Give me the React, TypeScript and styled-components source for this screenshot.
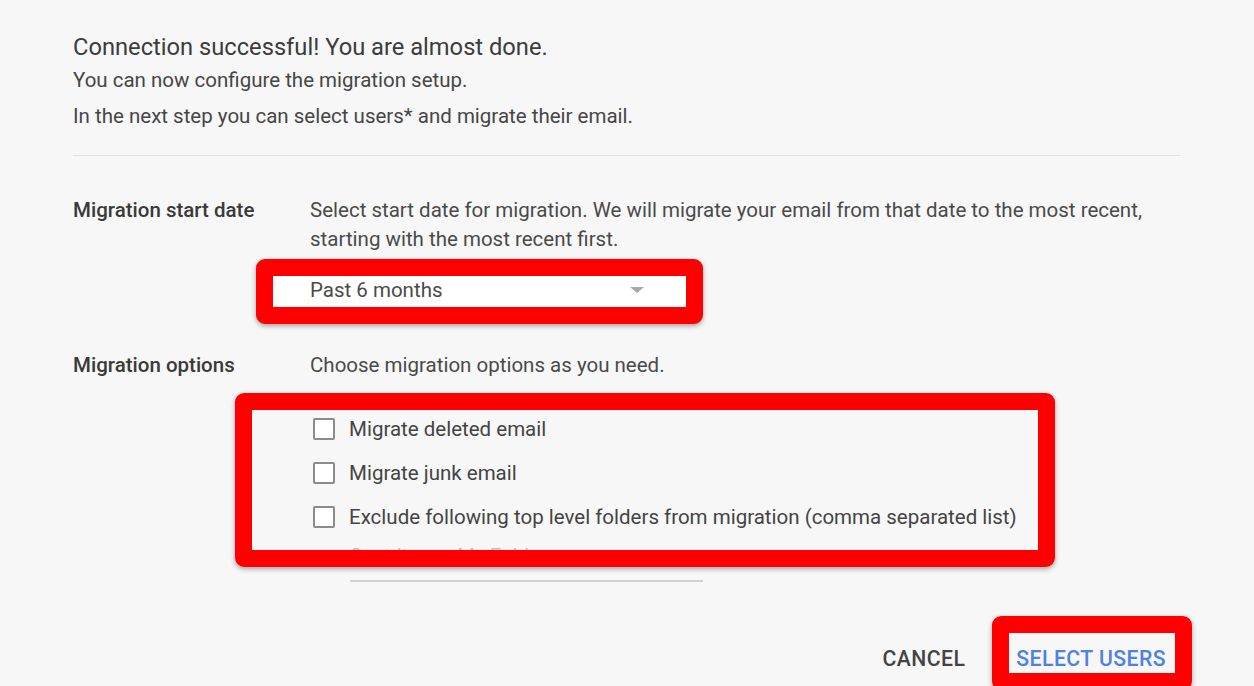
import React from "react"
import styled, { createGlobalStyle } from "styled-components"

const GlobalStyle = createGlobalStyle`
    html, body {
        margin:0;
        padding:0;
        background:#f7f7f7;
        overflow:hidden;
    }
    body {
        font-family:Roboto, "Noto Sans", Arial, sans-serif;
        color:#444;
    }
`

const Page = styled.div`
    position:relative;
    width:1254px;
    height:686px;
    box-sizing:border-box;
    padding:33px 74px 0 73px;
`

const Title = styled.h1`
    margin:0;
    font-size:23.7px;
    line-height:28px;
    font-weight:400;
    color:#3c3c3c;
`

const Intro = styled.p<{ $gap?: number }>`
    margin:${(p) => p.$gap ?? 6}px 0 0;
    font-size:20.5px;
    line-height:26px;
    color:#464646;
`

const Divider = styled.hr`
    margin:26px 0 0;
    border:none;
    border-top:1px solid #e3e3e3;
`

const Section = styled.div<{ $top: number }>`
    display:grid;
    grid-template-columns:237px 1fr;
    margin-top:${(p) => p.$top}px;
`

const Label = styled.div`
    font-size:20.5px;
    line-height:29px;
    font-weight:500;
    color:#3a3a3a;
`

const Description = styled.div`
    font-size:20.5px;
    line-height:29px;
    color:#4a4a4a;
`

const Dropdown = styled.div`
    position:relative;
    z-index:1;
    display:flex;
    align-items:center;
    justify-content:space-between;
    width:334px;
    height:32px;
    margin-top:20px;
    font-size:20.5px;
    color:#4a4a4a;
`

const Caret = styled.span`
    width:0;
    height:0;
    border-left:7px solid transparent;
    border-right:7px solid transparent;
    border-top:6px solid #a8a8a8;
`

const OptionList = styled.div`
    display:flex;
    flex-direction:column;
    gap:22px;
    margin-top:38px;
    padding-left:3px;
`

const Option = styled.label`
    display:flex;
    align-items:center;
    gap:14px;
    font-size:20.5px;
    line-height:22px;
    color:#444;
`

const Box = styled.span`
    width:18px;
    height:18px;
    border:2px solid #8c8c8c;
    border-radius:2px;
    background:#fff;
    flex:none;
`

const FolderInput = styled.input`
    display:block;
    width:353px;
    margin:16px 0 0 40px;
    padding:0 0 12px;
    border:none;
    border-bottom:2px solid #d2d2d2;
    background:transparent;
    font-family:inherit;
    font-size:20.5px;
    outline:none;
    &::placeholder {
        color:#bdbdbd;
    }
`

const Actions = styled.div`
    display:flex;
    justify-content:flex-end;
    gap:51px;
    margin-top:64px;
    padding-right:14px;
`

const TextButton = styled.button<{ $primary?: boolean }>`
    padding:0;
    border:none;
    background:transparent;
    font-family:inherit;
    font-size:21.2px;
    font-weight:500;
    letter-spacing:0.45px;
    color:${(p) => (p.$primary ? "#4f80e6" : "#444")};
    cursor:pointer;
`

const Highlight = styled.div<{ $x: number; $y: number; $w: number; $h: number; $fill?: string }>`
    position:absolute;
    left:${(p) => p.$x}px;
    top:${(p) => p.$y}px;
    width:${(p) => p.$w}px;
    height:${(p) => p.$h}px;
    box-sizing:border-box;
    border:17px solid #ff0000;
    border-radius:9px;
    background:${(p) => p.$fill ?? "transparent"};
    box-shadow:0 2px 5px rgba(0, 0, 0, 0.35);
    pointer-events:none;
`

const options = [
    "Migrate deleted email",
    "Migrate junk email",
    "Exclude following top level folders from migration (comma separated list)",
]

const App = () => {
    return (
        <Page>
            <GlobalStyle />
            <Title>Connection successful! You are almost done.</Title>
            <Intro>You can now configure the migration setup.</Intro>
            <Intro $gap={10}>In the next step you can select users* and migrate their email.</Intro>
            <Divider />

            <Section $top={40}>
                <Label>Migration start date</Label>
                <div>
                    <Description>
                        Select start date for migration. We will migrate your email from that date to the most recent,
                        <br />
                        starting with the most recent first.
                    </Description>
                </div>
            </Section>
            <Highlight $x={256} $y={259} $w={447} $h={65} $fill="#fff" />
            <Section $top={0}>
                <div />
                <Dropdown>
                    <span>Past 6 months</span>
                    <Caret />
                </Dropdown>
            </Section>

            <Section $top={45}>
                <Label>Migration options</Label>
                <div>
                    <Description>Choose migration options as you need.</Description>
                    <OptionList>
                        {options.map((o) => (
                            <Option key={o}>
                                <Box />
                                {o}
                            </Option>
                        ))}
                    </OptionList>
                    <FolderInput placeholder="Sent Items, My Folder" />
                </div>
            </Section>

            <Actions>
                <TextButton>CANCEL</TextButton>
                <TextButton $primary>SELECT USERS</TextButton>
            </Actions>

            <Highlight $x={235} $y={393} $w={820} $h={174} />
            <Highlight $x={992} $y={616} $w={200} $h={74} />
        </Page>
    )
}

export default App
